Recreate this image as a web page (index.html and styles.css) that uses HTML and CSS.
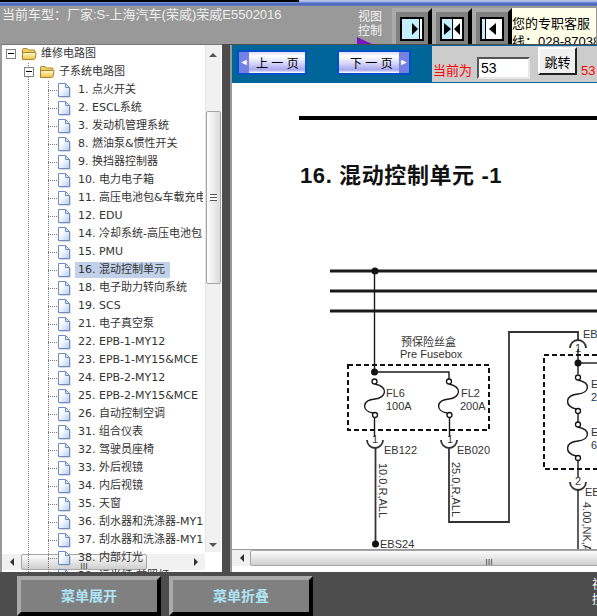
FILE: index.html
```html
<!DOCTYPE html>
<html lang="zh-CN">
<head>
    <meta charset="UTF-8">
    <title>维修电路图</title>
    <link rel="stylesheet" href="styles.css">
</head>
<body>

    <!-- icons used by the tree -->
    <svg class="icon-defs" width="0" height="0">
        <defs>
            <linearGradient id="docFill" x1="0" y1="0" x2="1" y2="1">
                <stop offset="0.35" stop-color="#ffffff"/>
                <stop offset="1" stop-color="#b4ccf0"/>
            </linearGradient>
            <linearGradient id="folderFill" x1="0" y1="0" x2="0" y2="1">
                <stop offset="0" stop-color="#fffbd0"/>
                <stop offset="1" stop-color="#f0c040"/>
            </linearGradient>
            <symbol id="docIcon" viewBox="0 0 14 16">
                <path d="M2.5 2.5H9.5L13.5 6.5V15.5H2.5Z" fill="#b8b8b8"/>
                <path d="M1.5 1.5H8.5L12.5 5.5V14.5H1.5Z" fill="url(#docFill)" stroke="#6c8cc4"/>
                <path d="M8.5 1.5V5.5H12.5Z" fill="#e4ecfa" stroke="#6c8cc4"/>
            </symbol>
            <symbol id="folderIcon" viewBox="0 0 16 14">
                <path d="M1.5 11V2.5Q1.5 1.5 2.5 1.5H6L7.5 3H13Q14 3 14 4V11Z" fill="#f0cf68" stroke="#a8852a"/>
                <path d="M1.5 12.5V7Q1.5 5.5 3 5.5H14Q15.5 5.5 15 7L14 11.5Q13.7 12.5 12.5 12.5Z" fill="url(#folderFill)" stroke="#a8852a"/>
            </symbol>
        </defs>
    </svg>

    <div class="title-strip"></div>

    <!-- top bar -->
    <div class="topbar">
        <div class="car-info">当前车型：厂家:S-上海汽车(荣威)荣威E5502016</div>
        <div class="view-control">
            <div class="view-label">视图<br>控制<span class="view-flag"></span></div>
            <div class="view-btn">
                <svg width="24" height="24" viewBox="0 0 24 24"><rect x="1" y="1" width="22" height="22" fill="#c2eeff" stroke="#000" stroke-width="2"/><rect x="20" y="2" width="2" height="20" fill="#fff"/><rect x="19" y="2" width="1" height="20" fill="#000"/><polygon points="12,6 18,12 12,18" fill="#000"/></svg>
            </div>
            <div class="view-btn">
                <svg width="24" height="24" viewBox="0 0 24 24"><rect x="1" y="1" width="22" height="22" fill="#fff" stroke="#000" stroke-width="2"/><rect x="2" y="2" width="10" height="20" fill="#c2eeff"/><rect x="12" y="2" width="1" height="20" fill="#000"/><polygon points="4,6 11,12 4,18" fill="#000"/><polygon points="20,6 14,12 20,18" fill="#000"/></svg>
            </div>
            <div class="view-btn">
                <svg width="24" height="24" viewBox="0 0 24 24"><rect x="1" y="1" width="22" height="22" fill="#fff" stroke="#000" stroke-width="2"/><rect x="2" y="2" width="3" height="20" fill="#c2eeff"/><rect x="5" y="2" width="1" height="20" fill="#000"/><polygon points="16,6 9,12 16,18" fill="#000"/></svg>
            </div>
        </div>
        <div class="service-box">您的专职客服<br>线：028-87038</div>
    </div>

    <div class="main">
        <!-- tree -->
        <div class="tree-panel">
            <ul class="tree-list">
                <li class="tree-row root-row"><span class="toggle"></span><svg class="folder"><use href="#folderIcon"/></svg><span class="tree-text">维修电路图</span></li>
                <li class="tree-row sub-row"><span class="toggle"></span><svg class="folder"><use href="#folderIcon"/></svg><span class="tree-text">子系统电路图</span></li>
                <li class="tree-row leaf"><svg class="doc"><use href="#docIcon"/></svg><span class="tree-text">1. 点火开关</span></li>
                <li class="tree-row leaf"><svg class="doc"><use href="#docIcon"/></svg><span class="tree-text">2. ESCL系统</span></li>
                <li class="tree-row leaf"><svg class="doc"><use href="#docIcon"/></svg><span class="tree-text">3. 发动机管理系统</span></li>
                <li class="tree-row leaf"><svg class="doc"><use href="#docIcon"/></svg><span class="tree-text">8. 燃油泵&amp;惯性开关</span></li>
                <li class="tree-row leaf"><svg class="doc"><use href="#docIcon"/></svg><span class="tree-text">9. 换挡器控制器</span></li>
                <li class="tree-row leaf"><svg class="doc"><use href="#docIcon"/></svg><span class="tree-text">10. 电力电子箱</span></li>
                <li class="tree-row leaf"><svg class="doc"><use href="#docIcon"/></svg><span class="tree-text">11. 高压电池包&amp;车载充电器</span></li>
                <li class="tree-row leaf"><svg class="doc"><use href="#docIcon"/></svg><span class="tree-text">12. EDU</span></li>
                <li class="tree-row leaf"><svg class="doc"><use href="#docIcon"/></svg><span class="tree-text">14. 冷却系统-高压电池包</span></li>
                <li class="tree-row leaf"><svg class="doc"><use href="#docIcon"/></svg><span class="tree-text">15. PMU</span></li>
                <li class="tree-row leaf"><svg class="doc"><use href="#docIcon"/></svg><span class="tree-text selected">16. 混动控制单元</span></li>
                <li class="tree-row leaf"><svg class="doc"><use href="#docIcon"/></svg><span class="tree-text">18. 电子助力转向系统</span></li>
                <li class="tree-row leaf"><svg class="doc"><use href="#docIcon"/></svg><span class="tree-text">19. SCS</span></li>
                <li class="tree-row leaf"><svg class="doc"><use href="#docIcon"/></svg><span class="tree-text">21. 电子真空泵</span></li>
                <li class="tree-row leaf"><svg class="doc"><use href="#docIcon"/></svg><span class="tree-text">22. EPB-1-MY12</span></li>
                <li class="tree-row leaf"><svg class="doc"><use href="#docIcon"/></svg><span class="tree-text">23. EPB-1-MY15&amp;MCE</span></li>
                <li class="tree-row leaf"><svg class="doc"><use href="#docIcon"/></svg><span class="tree-text">24. EPB-2-MY12</span></li>
                <li class="tree-row leaf"><svg class="doc"><use href="#docIcon"/></svg><span class="tree-text">25. EPB-2-MY15&amp;MCE</span></li>
                <li class="tree-row leaf"><svg class="doc"><use href="#docIcon"/></svg><span class="tree-text">26. 自动控制空调</span></li>
                <li class="tree-row leaf"><svg class="doc"><use href="#docIcon"/></svg><span class="tree-text">31. 组合仪表</span></li>
                <li class="tree-row leaf"><svg class="doc"><use href="#docIcon"/></svg><span class="tree-text">32. 驾驶员座椅</span></li>
                <li class="tree-row leaf"><svg class="doc"><use href="#docIcon"/></svg><span class="tree-text">33. 外后视镜</span></li>
                <li class="tree-row leaf"><svg class="doc"><use href="#docIcon"/></svg><span class="tree-text">34. 内后视镜</span></li>
                <li class="tree-row leaf"><svg class="doc"><use href="#docIcon"/></svg><span class="tree-text">35. 天窗</span></li>
                <li class="tree-row leaf"><svg class="doc"><use href="#docIcon"/></svg><span class="tree-text">36. 刮水器和洗涤器-MY12</span></li>
                <li class="tree-row leaf"><svg class="doc"><use href="#docIcon"/></svg><span class="tree-text">37. 刮水器和洗涤器-MY15</span></li>
                <li class="tree-row leaf"><svg class="doc"><use href="#docIcon"/></svg><span class="tree-text">38. 内部灯光</span></li>
                <li class="tree-row leaf"><svg class="doc"><use href="#docIcon"/></svg><span class="tree-text">39. 远光灯-前照灯</span></li>
            </ul>

            <div class="vbar">
                <span class="arrow arrow-up"></span>
                <span class="vbar-thumb"><span class="vbar-grip"></span></span>
                <span class="arrow arrow-down"></span>
            </div>
            <div class="hbar tree-hbar">
                <span class="arrow arrow-left"></span>
                <span class="hbar-thumb"><span class="hbar-grip">III</span></span>
                <span class="arrow arrow-right"></span>
            </div>
        </div>

        <!-- document -->
        <div class="doc-panel">
            <div class="doc-toolbar">
                <div class="page-btn prev-btn"><span class="page-arrow">◄</span><span class="page-text">上 一 页</span></div>
                <div class="page-btn next-btn"><span class="page-text">下 一 页</span><span class="page-arrow">►</span></div>
                <div class="goto">
                    <span class="goto-label">当前为</span>
                    <input class="goto-input" type="text" value="53">
                    <button class="goto-btn">跳转</button>
                    <span class="goto-total">53</span>
                </div>
            </div>

            <div class="doc-view">
                <svg class="diagram" width="365" height="466" viewBox="232 84 365 466">
                    <rect class="rule" x="299" y="117" width="298" height="4"/>
                    <text class="sheet-title" x="300" y="184">16. 混动控制单元 -1</text>

                    <line class="bus" x1="330" y1="272" x2="597" y2="272"/>
                    <line class="bus" x1="330" y1="292" x2="597" y2="292"/>
                    <line class="bus" x1="330" y1="312" x2="597" y2="312"/>
                    <circle class="dot" cx="375" cy="272" r="3.5"/>
                    <line class="wire" x1="374.5" y1="272" x2="374.5" y2="373"/>

                    <text class="label" x="401" y="347">预保险丝盒</text>
                    <text class="label" x="400" y="359">Pre Fusebox</text>
                    <rect class="fusebox" x="348" y="366" width="141" height="65"/>
                    <rect class="fusebox" x="544" y="356" width="70" height="114"/>

                    <!-- FL6 / FL2 -->
                    <circle class="dot" cx="374.5" cy="373" r="3.5"/>
                    <polyline class="wire" points="374.5,373 449,373 449,380"/>
                    <path class="wire" d="M375 385 C389 388 386 399 375 400 C362 401 361 412 373 414"/>
                    <circle class="pin" cx="374.5" cy="382.5" r="2.5"/>
                    <circle class="pin" cx="375" cy="416" r="2.5"/>
                    <line class="wire" x1="374.5" y1="418" x2="374.5" y2="438"/>
                    <text class="label" x="386" y="398">FL6</text>
                    <text class="label" x="386" y="411">100A</text>
                    <path class="wire" d="M449 385 C463 388 460 399 449 400 C436 401 435 412 447 414"/>
                    <circle class="pin" cx="449" cy="382.5" r="2.5"/>
                    <circle class="pin" cx="449.5" cy="416" r="2.5"/>
                    <line class="wire" x1="449.5" y1="418" x2="449.5" y2="438"/>
                    <text class="label" x="461" y="398">FL2</text>
                    <text class="label" x="460" y="411">200A</text>

                    <!-- connectors below fusebox -->
                    <text class="label" x="372" y="444">1</text>
                    <path class="wire-heavy" d="M367 441 A8 8 0 0 0 383 441"/>
                    <text class="label" x="447" y="444">1</text>
                    <path class="wire-heavy" d="M441 441 A8 8 0 0 0 457 441"/>
                    <text class="label" x="384" y="455">EB122</text>
                    <text class="label" x="457" y="455">EB020</text>

                    <line class="wire-heavy" x1="375.5" y1="449" x2="375.5" y2="545"/>
                    <circle class="dot" cx="375.5" cy="545" r="3.5"/>
                    <text class="label" x="380" y="549">EBS24</text>
                    <text class="label" transform="translate(379 464) rotate(90)">10.0,R,ALL</text>

                    <polyline class="wire-heavy" points="449,449 449,523 509,523 509,333 578,333 578,341"/>
                    <text class="label" transform="translate(452 463) rotate(90)">25.0,R,ALL</text>

                    <!-- right hand fusebox -->
                    <text class="label" x="583" y="339">EB</text>
                    <path class="wire-heavy" d="M570 349 A8 8 0 0 1 586 349"/>
                    <text class="label" x="575" y="353">1</text>
                    <line class="wire" x1="578" y1="350" x2="578" y2="375"/>
                    <circle class="dot" cx="578" cy="364" r="3.5"/>
                    <line class="wire" x1="578" y1="364" x2="597" y2="364"/>

                    <path class="wire" d="M578 381 C592 384 589 394 578 395 C565 396 564 407 576 410"/>
                    <circle class="pin" cx="578" cy="378.5" r="2.5"/>
                    <circle class="pin" cx="578" cy="412" r="2.5"/>
                    <line class="wire" x1="578" y1="414" x2="578" y2="423"/>
                    <path class="wire" d="M578 428 C592 431 589 441 578 442 C565 443 564 454 576 457"/>
                    <circle class="pin" cx="578" cy="425.5" r="2.5"/>
                    <circle class="pin" cx="578" cy="459" r="2.5"/>
                    <line class="wire" x1="578" y1="461" x2="578" y2="478"/>
                    <text class="label" x="591" y="389">E</text>
                    <text class="label" x="591" y="402">2</text>
                    <text class="label" x="591" y="437">E</text>
                    <text class="label" x="591" y="450">6</text>

                    <text class="label" x="575" y="486">2</text>
                    <path class="wire-heavy" d="M570 483 A8 8 0 0 0 586 483"/>
                    <text class="label" x="585" y="497">EB</text>
                    <line class="wire" x1="578" y1="491" x2="578" y2="550"/>
                    <text class="label" transform="translate(583 503) rotate(90)">4.00,NK,A</text>
                </svg>
            </div>

            <div class="hbar doc-hbar">
                <span class="arrow arrow-left"></span>
                <span class="hbar-thumb"><span class="hbar-grip">III</span></span>
            </div>
        </div>
    </div>

    <!-- bottom bar -->
    <div class="bottombar">
        <button class="menu-btn">菜单展开</button>
        <button class="menu-btn">菜单折叠</button>
        <div class="bottom-note">视图<br>控制</div>
    </div>

</body>
</html>
```

FILE: styles.css
```css
html, body {
    margin: 0;
    padding: 0;
    height: 616px;
    overflow: hidden;
}
body {
    width: 597px;
    background-color: #4d4d4d;
    font-family: "Liberation Sans", "Noto Sans CJK SC", sans-serif;
    display: flex;
    flex-direction: column;
}
.icon-defs {
    display: block;
    flex: none;
}

.title-strip {
    height: 6px;
    flex: none;
    background:
        linear-gradient(#000, #000) 0 0 / 299px 2px no-repeat,
        linear-gradient(#c4cfee 0, #93a7df 2px, #5470c4 3px, #4a66b8 5px, #7488c0 6px);
}

/* top bar */
.topbar {
    height: 38px;
    flex: none;
    background-color: #999;
    display: flex;
    overflow: hidden;
}
.car-info {
    width: 354px;
    flex: none;
    padding: 1px 0 0 2px;
    box-sizing: border-box;
    font-size: 13px;
    line-height: 15px;
    color: #eee;
    white-space: nowrap;
}
.view-control {
    display: flex;
    flex: none;
    padding-top: 2px;
}
.view-label {
    position: relative;
    width: 38px;
    flex: none;
    padding: 2px 0 0 4px;
    box-sizing: border-box;
    font-size: 12px;
    line-height: 14px;
    color: #f2f2f2;
}
.view-flag {
    position: absolute;
    left: 3px;
    top: 29px;
    width: 0;
    height: 0;
    border-left: 15px solid #7a18c0;
    border-top: 7px solid transparent;
}
.view-btn {
    width: 40px;
    height: 36px;
    box-sizing: border-box;
    background-color: #808080;
    border-top: 4px solid #aaa;
    border-left: 4px solid #aaa;
    border-right: 4px solid #000;
    padding: 5px 0 0 4px;
    flex: none;
}
.view-btn svg {
    display: block;
}
.service-box {
    margin-top: 2px;
    height: 36px;
    width: 84px;
    flex: none;
    background-color: #ffffe8;
    color: #000;
    font-size: 13px;
    line-height: 18px;
    padding-top: 7px;
    box-sizing: border-box;
    white-space: nowrap;
    overflow: hidden;
}

.main {
    height: 528px;
    flex: none;
    display: flex;
}

/* tree */
.tree-panel {
    position: relative;
    width: 222px;
    flex: none;
    box-sizing: border-box;
    background-color: #fff;
    border-left: 2px solid #999;
    border-top: 1px solid #777;
    overflow: hidden;
}
.tree-list {
    position: relative;
    z-index: 1;
    list-style: none;
    margin: 0;
    padding: 0;
    width: 201px;
    height: 527px;
    overflow: hidden;
    background: linear-gradient(#777 50%, transparent 50%) 26px 0 / 1px 2px repeat-y;
}
.tree-row {
    position: relative;
    height: 18px;
    display: flex;
    align-items: center;
    white-space: nowrap;
}
.root-row {
    padding-left: 4px;
    background-color: #fff;
}
.sub-row {
    padding-left: 22px;
}
.leaf {
    padding-left: 55px;
    background: linear-gradient(#777 50%, transparent 50%) 46px 0 / 1px 2px repeat-y;
}
.leaf::before {
    content: "";
    position: absolute;
    left: 46px;
    top: 9px;
    width: 9px;
    border-top: 1px dotted #777;
}
.toggle {
    position: relative;
    width: 8px;
    height: 8px;
    border: 1px solid #808080;
    background-color: #fff;
    flex: none;
}
.toggle::after {
    content: "";
    position: absolute;
    left: 1px;
    right: 1px;
    top: 3px;
    border-top: 1px solid #000;
}
.folder {
    width: 16px;
    height: 14px;
    margin: 0 1px 0 5px;
    flex: none;
}
.doc {
    width: 14px;
    height: 16px;
    flex: none;
}
.tree-text {
    font-family: "DejaVu Sans", "Noto Sans CJK SC", sans-serif;
    font-size: 11px;
    line-height: 16px;
    color: #333;
    padding: 0 3px;
}
.leaf .tree-text {
    margin-left: 4px;
}
.tree-text.selected {
    background-color: #c2d1ea;
    padding-right: 5px;
}

/* scrollbars */
.vbar {
    position: absolute;
    z-index: 2;
    left: 203px;
    top: 0;
    width: 15px;
    height: 507px;
    background-color: #f1f1f1;
    border-left: 1px solid #e4e4e4;
}
.vbar-thumb {
    position: absolute;
    left: 0;
    top: 66px;
    width: 13px;
    height: 171px;
    border: 1px solid #a5a5a5;
    border-radius: 2px;
    background: linear-gradient(90deg, #fdfdfd, #dcdcdc);
}
.vbar-grip {
    position: absolute;
    left: 3px;
    top: 82px;
    width: 7px;
    height: 5px;
    border-top: 1px solid #555;
    border-bottom: 1px solid #555;
    background: linear-gradient(#fff 40%, #555 40%, #555 60%, #fff 60%);
}
.hbar {
    position: absolute;
    background-color: #f1f1f1;
}
.tree-hbar {
    z-index: 0;
    left: 0;
    top: 509px;
    width: 203px;
    height: 16px;
}
.hbar-thumb {
    position: absolute;
    top: 0;
    height: 14px;
    border: 1px solid #a5a5a5;
    border-radius: 2px;
    background: linear-gradient(#fdfdfd, #cfcfcf);
    text-align: center;
}
.tree-hbar .hbar-thumb {
    left: 19px;
    width: 124px;
}
.hbar-grip {
    font: 9px/14px "Liberation Sans", sans-serif;
    color: #444;
}
.arrow {
    position: absolute;
    width: 0;
    height: 0;
}
.arrow-up {
    left: 3px;
    top: 8px;
    border-left: 4px solid transparent;
    border-right: 4px solid transparent;
    border-bottom: 4px solid #555;
}
.arrow-down {
    left: 3px;
    top: 498px;
    border-left: 4px solid transparent;
    border-right: 4px solid transparent;
    border-top: 4px solid #555;
}
.arrow-left {
    left: 8px;
    top: 4px;
    border-top: 4px solid transparent;
    border-bottom: 4px solid transparent;
    border-right: 4px solid #333;
}
.arrow-right {
    left: 192px;
    top: 4px;
    border-top: 4px solid transparent;
    border-bottom: 4px solid transparent;
    border-left: 4px solid #333;
}

/* document side */
.doc-panel {
    position: relative;
    flex: 1;
    margin-left: 8px;
    min-width: 0;
    margin-top: 1px;
    border-left: 2px solid #999;
    background-color: #fff;
    display: flex;
    flex-direction: column;
    height: 527px;
    overflow: hidden;
}
.doc-toolbar {
    height: 38px;
    flex: none;
    background-color: #006699;
    display: flex;
    padding-left: 5px;
    position: relative;
}
.page-btn {
    box-sizing: border-box;
    height: 25px;
    margin-top: 5px;
    border: 2px solid #0050c8;
    background: linear-gradient(#dcdcff 0, #fff 20%, #d4d4fa 55%, #a8a8ec 85%, #fff 100%);
    display: flex;
    align-items: center;
    font-size: 12px;
    color: #000;
    white-space: nowrap;
}
.prev-btn {
    width: 70px;
}
.next-btn {
    width: 74px;
    margin-left: 30px;
    padding-left: 11px;
}
.page-arrow {
    width: 10px;
    height: 21px;
    background-color: #7480e4;
    color: #fff;
    font-size: 9px;
    line-height: 21px;
    text-align: center;
    flex: none;
}
.page-text {
    padding: 0 7px;
}
.next-btn .page-text {
    padding: 0 6px 0 0;
}
.goto {
    position: absolute;
    left: 200px;
    top: 1px;
    right: 0;
    height: 36px;
    background-color: #cccccc;
    display: flex;
    align-items: flex-start;
}
.goto-label {
    color: #f00;
    font-size: 13px;
    margin: 17px 0 0 1px;
    line-height: 15px;
}
.goto-input {
    box-sizing: border-box;
    width: 53px;
    height: 22px;
    margin: 11px 0 0 5px;
    padding: 1px 2px;
    font: 14px "Liberation Sans", sans-serif;
    color: #000;
    background-color: #fff;
    border: 2px solid;
    border-color: #555 #e8e8e8 #e8e8e8 #555;
}
.goto-btn {
    box-sizing: border-box;
    width: 39px;
    height: 28px;
    margin: 1px 0 0 8px;
    padding: 0;
    font: 13px "Noto Sans CJK SC", sans-serif;
    background-color: #f0f0f0;
    color: #000;
    border: 2px solid;
    border-color: #fff #222 #222 #fff;
}
.goto-total {
    color: #f00;
    font-size: 13px;
    line-height: 15px;
    margin: 17px 0 0 4px;
}

.doc-view {
    height: 466px;
    flex: none;
    overflow: hidden;
}
.diagram {
    display: block;
}
.rule {
    fill: #000;
}
.sheet-title {
    font: bold 22px "Liberation Sans", "Noto Sans CJK SC", sans-serif;
    letter-spacing: 0.6px;
    fill: #111;
}
.bus {
    stroke: #1a1a1a;
    stroke-width: 3;
}
.wire {
    fill: none;
    stroke: #1a1a1a;
    stroke-width: 1.4;
}
.wire-heavy {
    fill: none;
    stroke: #333;
    stroke-width: 1.8;
}
.dot {
    fill: #111;
}
.pin {
    fill: #fff;
    stroke: #111;
    stroke-width: 1.3;
}
.fusebox {
    fill: none;
    stroke: #111;
    stroke-width: 2;
    stroke-dasharray: 5 3;
}
.label {
    font: 11px "Liberation Sans", "Noto Sans CJK SC", sans-serif;
    fill: #333;
}

.doc-hbar {
    left: 0;
    right: 0;
    top: 504px;
    height: 16px;
    border-top: 1px solid #999;
}
.doc-hbar .hbar-thumb {
    left: 18px;
    width: 476px;
}

/* bottom bar */
.bottombar {
    height: 44px;
    flex: none;
    display: flex;
    align-items: flex-start;
    padding: 4px 0 0 17px;
    box-sizing: border-box;
    position: relative;
    overflow: hidden;
}
.menu-btn {
    box-sizing: border-box;
    width: 144px;
    height: 40px;
    margin-right: 8px;
    padding: 0 0 2px;
    flex: none;
    background-color: #808080;
    color: #aee4f6;
    font: bold 14px "Noto Sans CJK SC", sans-serif;
    border-style: solid;
    border-width: 4px;
    border-color: #aaa #000 #000 #aaa;
}
.bottom-note {
    position: absolute;
    left: 592px;
    top: 6px;
    font-size: 12px;
    line-height: 15px;
    color: #fff;
    white-space: nowrap;
}
```
